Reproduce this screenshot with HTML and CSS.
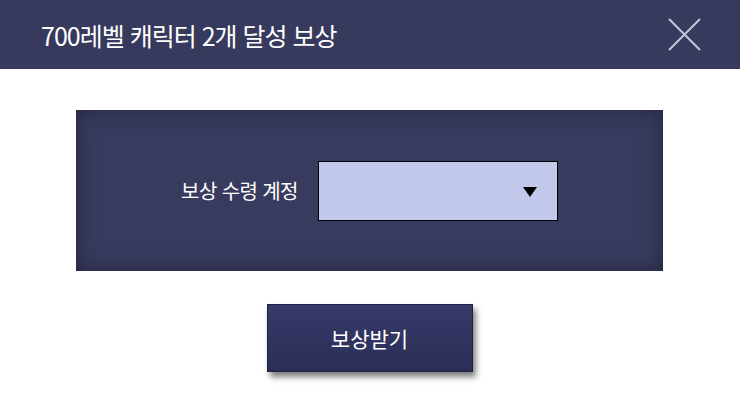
FILE: index.html
```html
<!DOCTYPE html>
<html lang="ko">
<head>
  <meta charset="UTF-8" />
  <meta name="viewport" content="width=device-width, initial-scale=1.0"/>
  <title>700레벨 캐릭터 2개 달성 보상</title>
  <link rel="stylesheet" href="styles.css">
</head>
<body>

  <div class="header">
    <h2>700레벨 캐릭터 2개 달성 보상</h2>
    <button class="close" aria-label="닫기">
      <svg width="33" height="33" viewBox="0 0 33 33">
        <path d="M1 1 L32 32 M32 1 L1 32" stroke="#c4c7d8" stroke-width="2" fill="none"/>
      </svg>
    </button>
  </div>

  <div class="content">
    <div class="panel">
      <div class="row">
        <span class="label">보상 수령 계정</span>
        <div class="select">
          <span class="arrow"></span>
        </div>
      </div>
    </div>

    <button class="reward">보상받기</button>
  </div>

</body>
</html>
```

FILE: styles.css
```css
body {
  margin: 0;
  padding: 0;
  font-family: "Noto Sans CJK KR", "Noto Sans", sans-serif;
  background: #fff;
}

.header {
  height: 69px;
  background: #373a5c;
  display: flex;
  align-items: center;
  justify-content: space-between;
  padding: 0 39px 0 41px;
}

.header h2 {
  margin: 0;
  color: #fff;
  font-size: 25px;
  font-weight: 400;
  letter-spacing: -1px;
}

.close {
  background: none;
  border: none;
  padding: 0;
  width: 33px;
  height: 33px;
  cursor: pointer;
}

.close svg {
  display: block;
}

.content {
  display: flex;
  flex-direction: column;
  align-items: center;
  padding: 41px 1px 30px 0;
}

.panel {
  width: 587px;
  height: 161px;
  background: #383b5e;
  box-shadow: inset 0 0 22px rgba(0, 0, 0, 0.35);
  display: flex;
  align-items: center;
  justify-content: center;
}

.row {
  display: flex;
  align-items: center;
  gap: 20px;
}

.label {
  color: #fff;
  font-size: 20px;
  letter-spacing: -0.6px;
}

.select {
  width: 218px;
  height: 58px;
  padding-right: 20px;
  background: #c3c9ea;
  border: 1px solid #000;
  display: flex;
  align-items: center;
  justify-content: flex-end;
}

.arrow {
  width: 0;
  height: 0;
  border-left: 7px solid transparent;
  border-right: 7px solid transparent;
  border-top: 10px solid #000;
  margin-top: 2px;
}

.reward {
  margin-top: 33px;
  width: 206px;
  height: 68px;
  background: linear-gradient(to bottom, #363a68, #2b2e56);
  border: 1px solid #1f2140;
  color: #fff;
  font-family: "Noto Sans CJK KR", sans-serif;
  font-size: 21px;
  box-shadow: 3px 5px 6px rgba(0, 0, 0, 0.5);
  cursor: pointer;
}
```
